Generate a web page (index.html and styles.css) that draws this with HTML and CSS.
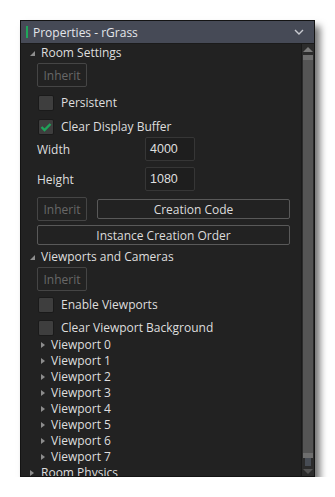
FILE: index.html
```html
<!DOCTYPE html>
<html lang="en">
<head>
    <meta charset="UTF-8">
    <meta name="viewport" content="width=device-width, initial-scale=1.0">
    <title>Properties - rGrass</title>
    <link rel="stylesheet" href="styles.css">
</head>
<body>
    <div class="panel">
        <div class="header">
            <span class="accent"></span>
            <span class="title">Properties - rGrass</span>
            <svg class="chevron" width="10" height="6" viewBox="0 0 10 6">
                <path d="M1 1 L5 5 L9 1" fill="none" stroke="#c8cad0" stroke-width="1.4"/>
            </svg>
        </div>
        <div class="body">
            <div class="content">
                <div class="section open">Room Settings</div>
                <div class="row-inherit"><span class="btn disabled">Inherit</span></div>

                <label class="check first"><span class="box"></span>Persistent</label>
                <label class="check"><span class="box"><svg width="12" height="10" viewBox="0 0 12 10"><path d="M1.5 5 L4.5 8 L10.5 2" fill="none" stroke="#1fa35a" stroke-width="2.4"/></svg></span>Clear Display Buffer</label>

                <div class="field first"><span class="field-label">Width</span><span class="input">4000</span></div>
                <div class="field"><span class="field-label">Height</span><span class="input">1080</span></div>

                <div class="btn-row">
                    <span class="btn disabled">Inherit</span>
                    <span class="btn wide">Creation Code</span>
                </div>
                <div class="btn full">Instance Creation Order</div>

                <div class="section open cams">Viewports and Cameras</div>
                <div class="row-inherit"><span class="btn disabled">Inherit</span></div>

                <label class="check first-vp"><span class="box"></span>Enable Viewports</label>
                <label class="check next-vp"><span class="box"></span>Clear Viewport Background</label>

                <ul class="tree">
                    <li>Viewport 0</li>
                    <li>Viewport 1</li>
                    <li>Viewport 2</li>
                    <li>Viewport 3</li>
                    <li>Viewport 4</li>
                    <li>Viewport 5</li>
                    <li>Viewport 6</li>
                    <li>Viewport 7</li>
                </ul>
                <div class="section closed">Room Physics</div>
            </div>
            <div class="scrollbar">
                <span class="arrow up"></span>
                <div class="thumb">
                    <span class="cap"></span>
                    <span class="grip"></span>
                    <span class="cap"></span>
                    <span class="foot"></span>
                </div>
                <span class="arrow down"></span>
            </div>
        </div>
    </div>
</body>
</html>
```

FILE: styles.css
```css
* {
    margin: 0;
    padding: 0;
    box-sizing: border-box;
}
body {
    font-family: 'Open Sans', 'Noto Sans', sans-serif;
    font-size: 12px;
    background-color: #ffffff;
    color: #dedede;
}
.panel {
    margin: 20px 0 0 20px;
    width: 295px;
    height: 457px;
    border: 1px solid #141414;
    background-color: #222222;
    box-shadow: 5px 6px 7px rgba(0, 0, 0, 0.55);
    display: flex;
    flex-direction: column;
    overflow: hidden;
}
.header {
    height: 23px;
    flex: none;
    background-color: #464a56;
    border-bottom: 1px solid #1b1b1b;
    display: flex;
    align-items: center;
    padding-left: 5px;
    padding-right: 10px;
}
.accent {
    width: 2px;
    height: 12px;
    background-color: #1fa65a;
    margin-right: 5px;
}
.title {
    flex: 1;
    font-size: 12px;
    color: #e4e6ea;
}
.body {
    flex: 1;
    display: flex;
    min-height: 0;
}
.content {
    flex: 1;
    padding-left: 16px;
    padding-right: 11px;
    overflow: hidden;
}
.section {
    height: 18px;
    line-height: 17px;
    margin-left: -16px;
    padding-left: 20px;
    position: relative;
}
.section::before {
    content: '';
    position: absolute;
    left: 9px;
    top: 7px;
}
.section.open::before {
    border-left: 5px solid transparent;
    border-bottom: 5px solid #8e8e8e;
}
.section.closed {
    height: 16px;
    line-height: 16px;
}
.section.closed::before,
.tree li::before {
    top: 5px;
    border-top: 3px solid transparent;
    border-bottom: 3px solid transparent;
    border-left: 4px solid #8c8c8c;
}
.section.cams {
    margin-top: 3px;
}
.row-inherit {
    margin-top: 1px;
    height: 24px;
}
.btn {
    display: flex;
    align-items: center;
    justify-content: center;
    height: 20px;
    border: 1px solid #595959;
    border-radius: 2px;
    color: #dcdcdc;
}
.btn.disabled {
    width: 50px;
    height: 24px;
    border-color: #454545;
    color: #686868;
}
.check {
    display: flex;
    align-items: center;
    height: 16px;
    margin-top: 8px;
    line-height: 14px;
}
.check.first-vp {
    margin-top: 6px;
}
.check.next-vp {
    margin-top: 7px;
}
.box {
    width: 16px;
    height: 16px;
    margin-left: 1px;
    margin-right: 7px;
    background-color: #3e3e3e;
    border: 1px solid #1a1a1a;
    border-radius: 2px;
    display: flex;
    align-items: center;
    justify-content: center;
}
.field {
    display: flex;
    align-items: center;
    height: 24px;
    margin-top: 6px;
}
.field.first {
    margin-top: 2px;
}
.field-label {
    width: 108px;
}
.input {
    width: 50px;
    height: 24px;
    line-height: 22px;
    padding-left: 4px;
    background-color: #1e1e1e;
    border: 1px solid #363636;
    border-radius: 2px;
    font-family: 'Liberation Sans', Arial, sans-serif;
    font-size: 12.5px;
}
.btn-row {
    display: flex;
    align-items: center;
    gap: 10px;
    margin-top: 6px;
}
.btn.wide {
    flex: 1;
}
.btn.full {
    margin-top: 4px;
}
.tree {
    list-style: none;
    margin-top: 1px;
}
.tree li {
    height: 16px;
    line-height: 16px;
    padding-left: 14px;
    position: relative;
}
.tree li::before {
    content: '';
    position: absolute;
    left: 4px;
}
.scrollbar {
    width: 13px;
    flex: none;
    background-color: #2c2c2c;
    border-left: 1px solid #1a1a1a;
    display: flex;
    flex-direction: column;
    align-items: center;
    padding: 3px 0 2px;
}
.arrow {
    width: 0;
    height: 0;
    border-left: 5px solid transparent;
    border-right: 5px solid transparent;
}
.arrow.up {
    border-bottom: 5px solid #7b7b7b;
}
.arrow.down {
    border-top: 5px solid #545454;
}
.thumb {
    flex: 1;
    width: 10px;
    margin: 3px 0 3px;
    display: flex;
    flex-direction: column;
}
.cap {
    height: 5px;
    background-color: #6e6e6e;
}
.grip {
    flex: 1;
    background-color: #555555;
}
.foot {
    height: 8px;
    background-color: #474c54;
    margin: 0 2px;
}
```
